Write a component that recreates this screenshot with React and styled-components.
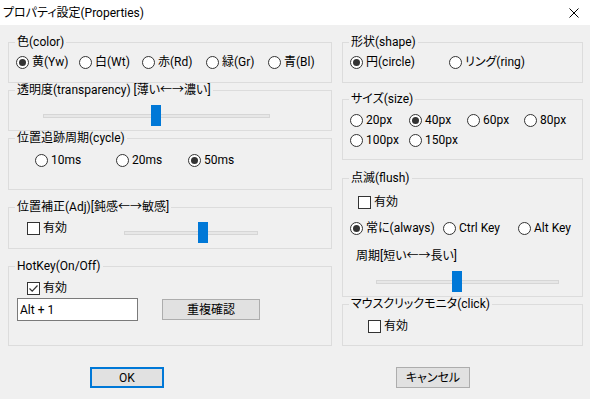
import React from "react";
import styled, { createGlobalStyle } from "styled-components";

const GlobalStyle = createGlobalStyle`
  html, body { margin: 0; padding: 0; }
  body {
    font-family: Roboto, "Noto Sans CJK JP", sans-serif;
    font-size: 12px;
    color: #000;
    background: #f0f0f0;
    font-feature-settings: "palt";
  }
`;

const Window = styled.div`
  width: 590px;
  height: 399px;
  background: #f0f0f0;
  display: flex;
  flex-direction: column;
  overflow: hidden;
`;

const TitleBar = styled.div`
  height: 25px;
  flex-shrink: 0;
  background: #fff;
  display: flex;
  align-items: center;
  justify-content: space-between;
  padding: 0 11px 0 3px;
  box-sizing: border-box;
  line-height: 14px;
`;

const Body = styled.div`
  padding: 17px 7px 0 8px;
  display: grid;
  grid-template-columns: 324px 241px;
  column-gap: 10px;
`;

const Column = styled.div`
  display: flex;
  flex-direction: column;
`;

const Group = styled.div`
  position: relative;
  border: 1px solid #dcdcdc;
  box-sizing: border-box;
  height: ${(p) => p.$h}px;
  margin-top: ${(p) => p.$mt || 0}px;
`;

const Legend = styled.span`
  position: absolute;
  top: -8px;
  left: 6px;
  padding: 0 2px;
  background: #f0f0f0;
  line-height: 14px;
  white-space: nowrap;
`;

const Row = styled.div`
  display: flex;
  align-items: ${(p) => p.$align || "center"};
  height: ${(p) => p.$h || 14}px;
  margin-top: ${(p) => p.$mt || 0}px;
  padding-left: ${(p) => p.$pl || 0}px;
`;

const Item = styled.label`
  display: flex;
  align-items: center;
  gap: 3px;
  height: 14px;
  line-height: 14px;
  white-space: nowrap;
  flex-shrink: 0;
  width: ${(p) => (p.$w ? `${p.$w}px` : "auto")};
  margin-top: ${(p) => p.$mt || 0}px;
`;

const Circle = styled.span`
  width: 13px;
  height: 13px;
  box-sizing: border-box;
  border: 1px solid #333;
  border-radius: 50%;
  background: #fff;
  display: flex;
  align-items: center;
  justify-content: center;
  flex-shrink: 0;
  &::after {
    content: "";
    display: ${(p) => (p.$on ? "block" : "none")};
    width: 7px;
    height: 7px;
    border-radius: 50%;
    background: #333;
  }
`;

const Box = styled.span`
  width: 13px;
  height: 13px;
  box-sizing: border-box;
  border: 1px solid #333;
  background: #fff;
  display: flex;
  align-items: center;
  justify-content: center;
  flex-shrink: 0;
`;

const Text = styled.span`
  line-height: 14px;
  white-space: nowrap;
`;

const SliderBox = styled.div`
  position: relative;
  width: ${(p) => p.$w}px;
  height: 21px;
  display: flex;
  align-items: center;
  flex-shrink: 0;
  margin-left: ${(p) => p.$ml || 0}px;
`;

const Track = styled.div`
  width: 100%;
  height: 4px;
  box-sizing: border-box;
  background: #e7e7e7;
  border: 1px solid #d6d6d6;
`;

const Thumb = styled.div`
  position: absolute;
  top: 0;
  left: ${(p) => p.$pos}px;
  width: 10px;
  height: 21px;
  background: #0078d7;
`;

const TextBox = styled.div`
  width: 121px;
  height: 23px;
  box-sizing: border-box;
  border: 1px solid #7a7a7a;
  background: #fff;
  padding-left: 2px;
  display: flex;
  align-items: center;
  flex-shrink: 0;
`;

const Button = styled.button`
  font: inherit;
  color: #000;
  width: ${(p) => p.$w}px;
  height: 21px;
  box-sizing: border-box;
  background: #e1e1e1;
  border: ${(p) => (p.$default ? "2px solid #0078d7" : "1px solid #adadad")};
  margin-left: ${(p) => p.$ml || 0}px;
  padding: 0;
  line-height: 14px;
  flex-shrink: 0;
`;

const Footer = styled.div`
  display: grid;
  grid-template-columns: 324px 241px;
  column-gap: 10px;
  padding-left: 8px;
  margin-top: 21px;
`;

const Radio = ({ on, w, children }) => (
  <Item $w={w}>
    <Circle $on={on} />
    <Text>{children}</Text>
  </Item>
);

const Check = ({ on, w, mt, children }) => (
  <Item $w={w} $mt={mt}>
    <Box>
      {on && (
        <svg width="11" height="11" viewBox="0 0 11 11">
          <path d="M1.5 5.5 L4.2 8.2 L9.5 2.5" fill="none" stroke="#333" strokeWidth="1.2" />
        </svg>
      )}
    </Box>
    <Text>{children}</Text>
  </Item>
);

const Slider = ({ w, pos, ml }) => (
  <SliderBox $w={w} $ml={ml}>
    <Track />
    <Thumb $pos={pos} />
  </SliderBox>
);

export default function App() {
  return (
    <>
      <GlobalStyle />
      <Window>
        <TitleBar>
          <Text>プロパティ設定(Properties)</Text>
          <svg width="10" height="10" viewBox="0 0 10 10">
            <path d="M0.5 0.5 L9.5 9.5 M9.5 0.5 L0.5 9.5" stroke="#000" strokeWidth="1" />
          </svg>
        </TitleBar>
        <Body>
          <Column>
            <Group $h={41}>
              <Legend>色(color)</Legend>
              <Row $mt={12} $pl={7}>
                <Radio on w={63}>黄(Yw)</Radio>
                <Radio w={63}>白(Wt)</Radio>
                <Radio w={64}>赤(Rd)</Radio>
                <Radio w={62}>緑(Gr)</Radio>
                <Radio>青(Bl)</Radio>
              </Row>
            </Group>
            <Group $h={41} $mt={7}>
              <Legend>透明度(transparency) [薄い←→濃い]</Legend>
              <Row $h={21} $mt={14} $pl={34}>
                <Slider w={227} pos={108} />
              </Row>
            </Group>
            <Group $h={52} $mt={7}>
              <Legend>位置追跡周期(cycle)</Legend>
              <Row $mt={14} $pl={26}>
                <Radio w={81}>10ms</Radio>
                <Radio w={72}>20ms</Radio>
                <Radio on>50ms</Radio>
              </Row>
            </Group>
            <Group $h={42} $mt={17}>
              <Legend>位置補正(Adj)[鈍感←→敏感]</Legend>
              <Row $h={21} $mt={14} $pl={18} $align="flex-start">
                <Check w={97} mt={-1}>有効</Check>
                <Slider w={134} pos={74} />
              </Row>
            </Group>
            <Group $h={80} $mt={17}>
              <Legend>HotKey(On/Off)</Legend>
              <Row $mt={14} $pl={18}>
                <Check on>有効</Check>
              </Row>
              <Row $h={23} $mt={3} $pl={8}>
                <TextBox>Alt + 1</TextBox>
                <Button $w={98} $ml={24}>重複確認</Button>
              </Row>
            </Group>
          </Column>
          <Column>
            <Group $h={41}>
              <Legend>形状(shape)</Legend>
              <Row $mt={12} $pl={7}>
                <Radio on w={99}>円(circle)</Radio>
                <Radio>リング(ring)</Radio>
              </Row>
            </Group>
            <Group $h={61} $mt={16}>
              <Legend>サイズ(size)</Legend>
              <Row $mt={13} $pl={7}>
                <Radio w={59}>20px</Radio>
                <Radio on w={58}>40px</Radio>
                <Radio w={57}>60px</Radio>
                <Radio>80px</Radio>
              </Row>
              <Row $mt={6} $pl={7}>
                <Radio w={59}>100px</Radio>
                <Radio>150px</Radio>
              </Row>
            </Group>
            <Group $h={119} $mt={18}>
              <Legend>点滅(flush)</Legend>
              <Row $mt={16} $pl={15}>
                <Check>有効</Check>
              </Row>
              <Row $mt={12} $pl={7}>
                <Radio on w={93}>常に(always)</Radio>
                <Radio w={75}>Ctrl Key</Radio>
                <Radio>Alt Key</Radio>
              </Row>
              <Row $mt={14} $pl={13}>
                <Text>周期[短い←→長い]</Text>
              </Row>
              <Row $h={21} $mt={8} $pl={33}>
                <Slider w={183} pos={76} />
              </Row>
            </Group>
            <Group $h={42} $mt={7}>
              <Legend>マウスクリックモニタ(click)</Legend>
              <Row $mt={14} $pl={25}>
                <Check>有効</Check>
              </Row>
            </Group>
          </Column>
        </Body>
        <Footer>
          <div>
            <Button $default $w={74} $ml={82}>OK</Button>
          </div>
          <div>
            <Button $w={74} $ml={54}>キャンセル</Button>
          </div>
        </Footer>
      </Window>
    </>
  );
}
